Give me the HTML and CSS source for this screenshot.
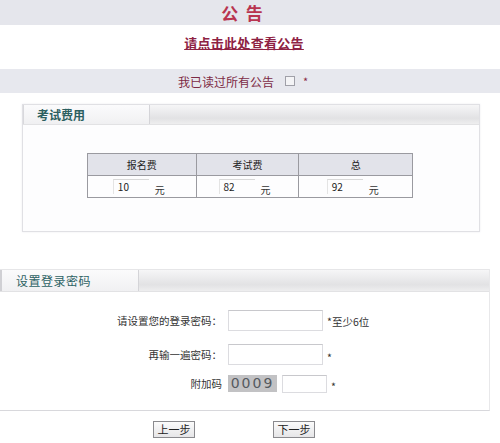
FILE: index.html
```html
<!DOCTYPE html>
<html lang="zh">
<head>
<meta charset="utf-8">
<title>公告</title>
<link rel="stylesheet" href="styles.css">
</head>
<body>
<div class="topbar"><span class="title">公&nbsp;&nbsp;告</span></div>
<div class="notice"><a class="notice-link" href="#">请点击此处查看公告</a></div>
<div class="readbar">
  <span class="read-text">我已读过所有公告</span>
  <span class="checkbox"></span>
  <span class="star">*</span>
</div>

<div class="fee-box">
  <div class="box-head"><div class="box-tab">考试费用</div></div>
  <table class="fee-table">
    <tr>
      <th class="c1">报名费</th>
      <th class="c2">考试费</th>
      <th class="c3">总</th>
    </tr>
    <tr>
      <td><span class="fee-input">10</span><span class="unit">元</span></td>
      <td><span class="fee-input">82</span><span class="unit">元</span></td>
      <td><span class="fee-input">92</span><span class="unit">元</span></td>
    </tr>
  </table>
</div>

<div class="pwd-box">
  <div class="box-head"><div class="box-tab pwd-tab">设置登录密码</div></div>
  <div class="form">
    <div class="row r1">
      <span class="label">请设置您的登录密码：</span>
      <span class="field"><span class="text-input"></span><span class="hint">*至少6位</span></span>
    </div>
    <div class="row r2">
      <span class="label">再输一遍密码：</span>
      <span class="field"><span class="text-input"></span><span class="hint">*</span></span>
    </div>
    <div class="row r3">
      <span class="label">附加码</span>
      <span class="field"><span class="code">0009</span><span class="text-input small"></span><span class="hint">*</span></span>
    </div>
  </div>
</div>
<div class="buttons">
  <span class="btn">上一步</span>
  <span class="btn">下一步</span>
</div>
</body>
</html>
```

FILE: styles.css
```css
html, body {
  margin: 0;
  padding: 0;
  background: #ffffff;
}
body {
  width: 500px;
  height: 443px;
  overflow: hidden;
  font-family: "Noto Sans CJK SC", "Noto Sans", sans-serif;
  font-size: 12px;
  color: #333;
}
.topbar {
  height: 25px;
  background: #e5e6ec;
  display: flex;
  align-items: center;
  justify-content: center;
  padding-right: 16px;
}
.title {
  color: #b8344f;
  font-size: 17px;
  font-weight: bold;
  line-height: 25px;
}
.notice {
  height: 44px;
  display: flex;
  justify-content: center;
  align-items: flex-start;
  padding-right: 12px;
}
.notice-link {
  margin-top: 9px;
  color: #8e2243;
  font-size: 13px;
  font-weight: bold;
  letter-spacing: 0.3px;
  text-decoration: underline;
  line-height: 18px;
}
.readbar {
  height: 24px;
  background: #e7e8ee;
  display: flex;
  align-items: center;
  justify-content: center;
  padding-right: 14px;
}
.read-text {
  color: #7d2b45;
  font-size: 12px;
}
.checkbox {
  width: 8px;
  height: 8px;
  border: 1px solid #a0a0a8;
  background: #f4f4f6;
  margin-left: 11px;
}
.star {
  color: #8a2a45;
  margin-left: 8px;
  font-size: 11px;
}

.fee-box {
  margin: 11px 0 0 22px;
  width: 456px;
  height: 126px;
  border: 1px solid #e0e0e4;
  background: #fdfdfe;
  box-shadow: 0 0 2px #ececf0;
}
.box-head {
  height: 19px;
  background: linear-gradient(#f6f6f7, #e2e2e4 70%, #eeeeef);
  border-bottom: 1px solid #e2e2e4;
}
.box-tab {
  width: 112px;
  height: 19px;
  padding-left: 13px;
  background: linear-gradient(#fbfbfc, #f0f0f2);
  border-right: 1px solid #d4d4d8;
  border-left: 1px solid #d8d8dc;
  color: #2c5f60;
  font-weight: bold;
  font-size: 12px;
  line-height: 19px;
}
.fee-table {
  margin: 28px 0 0 64px;
  width: 326px;
  border-collapse: collapse;
  font-size: 10px;
}
.fee-table th, .fee-table td {
  border: 1px solid #9a9aa0;
  height: 21px;
  text-align: center;
  padding: 0;
}
.fee-table th {
  background: #e2e3ea;
  font-weight: normal;
  color: #222;
}
.c1 { width: 108px; }
.c2 { width: 102px; }
.c3 { width: 113px; }
.fee-input {
  display: inline-block;
  width: 31px;
  height: 14px;
  padding-left: 4px;
  border-top: 1px solid #d8d8d8;
  border-left: 1px solid #e4e4e4;
  text-align: left;
  line-height: 14px;
  font-size: 10px;
  color: #222;
  vertical-align: middle;
  margin-left: -6px;
}
.unit {
  display: inline-block;
  margin-left: 6px;
  font-size: 10px;
  vertical-align: middle;
  margin-top: 6px;
}

.pwd-box {
  margin-top: 37px;
  width: 489px;
  border-right: 1px solid #e8e8ea;
  border-bottom: 1px solid #d8d8dc;
  height: 141px;
}
.pwd-box .box-head {
  height: 21px;
  border-top: 1px solid #e6e6e8;
}
.pwd-tab {
  width: 122px;
  height: 21px;
  line-height: 21px;
  padding-left: 14px;
  font-size: 12px;
  letter-spacing: 0.5px;
  color: #2d6264;
  font-weight: normal;
  border-left: 2px solid #d0d0d4;
}
.form {
  padding-top: 18px;
}
.row {
  display: grid;
  grid-template-columns: 222px auto;
  column-gap: 6px;
  align-items: center;
  font-size: 10.5px;
  color: #333;
}
.r2 { margin-top: 13px; }
.r3 { margin-top: 8px; }
.label {
  text-align: right;
}
.field {
  display: flex;
  align-items: center;
}
.text-input {
  width: 93px;
  height: 19px;
  border: 1px solid #dcdce0;
  border-top-color: #c8c8cc;
  background: #fff;
}
.text-input.small {
  width: 43px;
  height: 16px;
  margin-left: 5px;
}
.hint {
  margin-left: 4px;
  font-size: 10.5px;
  color: #333;
  margin-top: 6px;
}
.r1 .hint { margin-top: 2px; }
.code {
  width: 49px;
  height: 17px;
  background: #c2c2c4;
  color: #555a60;
  font-family: "DejaVu Sans", sans-serif;
  font-size: 14px;
  letter-spacing: 2px;
  line-height: 17px;
  text-align: center;
}
.buttons {
  display: flex;
  padding-left: 153px;
  gap: 78px;
  margin-top: 10px;
}
.btn {
  width: 40px;
  height: 15px;
  border: 1px solid #8a8a8e;
  background: linear-gradient(#fbfbfb, #e6e6e8);
  font-size: 11px;
  line-height: 15px;
  text-align: center;
  color: #222;
}
```
